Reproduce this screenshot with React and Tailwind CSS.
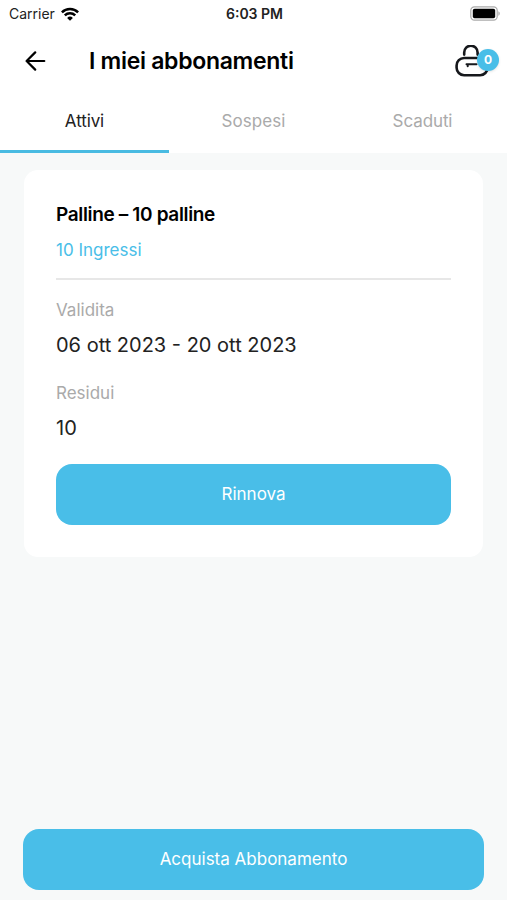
const tabs = [
  { label: "Attivi", active: true, text: "tracking-[-0.1px]" },
  { label: "Sospesi", active: false, text: "tracking-[0.1px]" },
  { label: "Scaduti", active: false, text: "tracking-[-0.1px]" },
];

function StatusBar() {
  return (
    <div className="grid h-7 grid-cols-3 items-center pl-[9px] pr-[7px] text-[#222]">
      <div className="flex items-center gap-[6px]">
        <span className="text-[14px] leading-7">Carrier</span>
        <svg width="18" height="14" viewBox="0 0 18 14" fill="none" stroke="#000" strokeWidth="2.5">
          <path d="M0.9 5.3a11.6 11.6 0 0 1 16.2 0" />
          <path d="M3.8 8.4a7.4 7.4 0 0 1 10.4 0" />
          <path d="M9 13.8 6.1 10.9a4.1 4.1 0 0 1 5.8 0Z" fill="#000" stroke="none" />
        </svg>
      </div>
      <span className="text-center text-[14px] font-semibold leading-7">6:03 PM</span>
      <svg className="justify-self-end" width="30" height="16" viewBox="0 0 30 16">
        <rect x="0.8" y="0.8" width="26.4" height="13.4" rx="3.6" fill="#fff" stroke="#aaa" strokeWidth="1.2" />
        <rect x="2.8" y="2.8" width="22.4" height="9.4" rx="1.8" fill="#000" />
        <path d="M28.4 5.2c1.8.8 1.8 3.8 0 4.6Z" fill="#aaa" />
      </svg>
    </div>
  );
}

function Header() {
  return (
    <header className="flex h-[66px] items-center pl-[25px] pr-[7px]">
      <svg width="21" height="20" viewBox="0 0 21 20" fill="none" stroke="#000" strokeWidth="2.2" strokeLinecap="round" strokeLinejoin="round">
        <path d="M19.3 10H1.6M10.2 1.4 1.6 10l8.6 8.6" />
      </svg>
      <h1 className="ml-[43px] text-[23px] font-semibold tracking-[-0.3px] text-black">I miei abbonamenti</h1>
      <div className="relative ml-auto h-8 w-[46px]">
        <svg width="46" height="32" viewBox="0 0 46 32" fill="none" stroke="#16181c" strokeWidth="2.6" strokeLinecap="round">
          <path d="M10.2 9.6V7.4a6.7 6.7 0 0 1 13.4 0v2.2" />
          <rect x="2.6" y="13" width="31" height="17.2" rx="7.5" />
          <path d="M12.5 19.2h10M13.7 19.2v2" strokeWidth="2" />
        </svg>
        <span className="absolute left-[23px] top-1 flex h-[22px] w-[22px] items-center justify-center rounded-full bg-[#49bee8] text-[12px] font-bold text-white shadow">0</span>
      </div>
    </header>
  );
}

function Tabs() {
  return (
    <nav className="grid h-[59px] grid-cols-3">
      {tabs.map((t) => (
        <div
          key={t.label}
          className={
            "flex items-center justify-center border-b-[3px] text-[17px] " +
            t.text +
            (t.active ? " border-[#49bbe2] text-[#222]" : " border-transparent text-[#aaa]")
          }
        >
          {t.label}
        </div>
      ))}
    </nav>
  );
}

function Card() {
  return (
    <section className="mx-6 mt-[17px] h-[387px] rounded-[14px] bg-white px-8 pt-8">
      <h2 className="text-[19px] font-semibold leading-[26px] tracking-[-0.35px] text-black">Palline – 10 palline</h2>
      <p className="mt-[10px] text-[17px] leading-6 text-[#49bee8]">10 Ingressi</p>
      <div className="mt-4 h-[2px] bg-[#e7e7e7]" />
      <p className="mt-[18px] text-[17px] leading-6 text-[#aaa]">Validita</p>
      <p className="mt-[10px] text-[20px] leading-[26px] text-[#222]">06 ott 2023 - 20 ott 2023</p>
      <p className="mt-[23px] text-[17px] leading-6 text-[#aaa]">Residui</p>
      <p className="mt-[10px] text-[20px] leading-[26px] text-[#222]">10</p>
      <button className="mt-[23px] h-[61px] w-full rounded-2xl bg-[#49bee8] text-[17px] text-white">Rinnova</button>
    </section>
  );
}

export default function App() {
  return (
    <div className="flex h-[900px] w-[507px] flex-col overflow-hidden bg-[#f7f9f9] font-['Inter',sans-serif]">
      <div className="bg-white">
        <StatusBar />
        <Header />
        <Tabs />
      </div>
      <Card />
      <button className="mx-[23px] mb-[10px] mt-auto h-[61px] rounded-2xl bg-[#49bee8] text-[17px] text-white">
        Acquista Abbonamento
      </button>
    </div>
  );
}
